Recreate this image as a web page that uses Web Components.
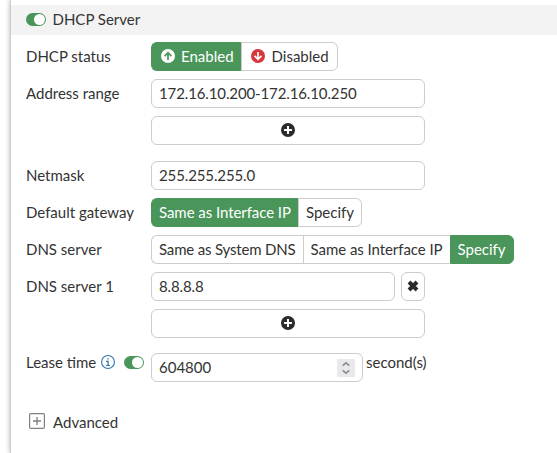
<!DOCTYPE html>
<html lang="en">
<head>
<meta charset="utf-8">
<title>DHCP Server</title>
<style>
html,body{margin:0;height:100%;background:#fff;overflow:hidden}
body{font:15px/20px Lato,"Liberation Sans",sans-serif;color:#333}
</style>
</head>
<body>
<dhcp-panel></dhcp-panel>
<script>
const define = (name, html) => {
  const t = document.createElement('template');
  t.innerHTML = '<style>*{box-sizing:border-box}:host{box-sizing:border-box}</style>' + html;
  customElements.define(name, class extends HTMLElement {
    constructor() {
      super();
      this.attachShadow({ mode: 'open' }).append(t.content.cloneNode(true));
    }
  });
};

const icons = {
  up: '<circle cx="7" cy="7" r="7" fill="#fff"/><path d="M7 11V3.8M3.6 7.1L7 3.7l3.4 3.4" fill="none" stroke="#4a955a" stroke-width="1.7"/>',
  down: '<circle cx="7" cy="7" r="7" fill="#d9363e"/><path d="M7 3v7.2M3.6 6.9L7 10.3l3.4-3.4" fill="none" stroke="#fff" stroke-width="1.7"/>',
  plus: '<circle cx="7" cy="7" r="7" fill="#2b2b2b"/><path d="M7 3v8M3 7h8" stroke="#fff" stroke-width="2"/>',
  times: '<path d="M3 3l8 8M11 3l-8 8" stroke="#2b2b2b" stroke-width="3.9"/>',
  info: '<circle cx="7" cy="7" r="6.45" fill="#fff" stroke="#2f77b0" stroke-width="1.1"/><path d="M6.3 3.2h1.5v1.4H6.3zM5 5.8h2.7v4.1H9V11H4.9V9.9h1.5v-3H5z" fill="#2f77b0"/>'
};
customElements.define('ui-icon', class extends HTMLElement {
  constructor() {
    super();
    this.attachShadow({ mode: 'open' });
  }
  connectedCallback() {
    this.shadowRoot.innerHTML = '<style>:host{display:block;width:14px;height:14px;flex:none}svg{display:block}</style><svg width="14" height="14" viewBox="0 0 14 14">' + icons[this.getAttribute('name')] + '</svg>';
  }
});

define('toggle-switch', `<style>
:host{display:flex;width:20px;height:13px;flex:none;border-radius:7px;background:#4a955a;padding:1px;justify-content:flex-end}
i{width:11px;height:11px;border-radius:50%;background:#fff}
</style><i></i>`);

define('option-group', `<style>
:host{display:inline-flex;height:29px}
::slotted(option-item:first-child){border-radius:6px 0 0 6px}
::slotted(option-item:last-child){border-radius:0 6px 6px 0}
</style><slot></slot>`);

define('option-item', `<style>
:host{display:flex;align-items:center;gap:6px;height:29px;border:1px solid #ccc;padding:0 7px 1px;background:#fff;white-space:nowrap}
:host(:not(:last-child)){border-right-width:0}
:host([selected]){background:#4a955a;border-color:#4a955a;color:#fff}
:host([icon]){padding:0 7px 1px 9px}
:host([icon]:last-child){gap:7px;padding-right:8px}
</style><slot name="icon"></slot><span><slot></slot></span>`);

define('text-field', `<style>
:host{display:flex;align-items:center;width:274px;height:29px;border:1px solid #ccc;border-radius:6px;padding:0 7px 1px;background:#fff}
span{flex:1}
</style><span><slot></slot></span><slot name="end"></slot>`);

define('number-stepper', `<style>
:host{display:block;width:18px;height:18px;margin-top:2px;background:#e9e9ed}
svg{display:block}
</style><svg width="18" height="18" fill="none" stroke="#8b8b91" stroke-width="1.7"><path d="M5.7 6.6L9 3.8l3.3 2.8M5.7 11.4L9 14.2l3.3-2.8"/></svg>`);

define('icon-button', `<style>
:host{display:flex;align-items:center;justify-content:center;width:274px;height:29px;padding-bottom:1px;border:1px solid #ccc;border-radius:6px;background:#fff}
:host([small]){width:24px}
</style><slot></slot>`);

define('form-row', `<style>
:host{display:grid;grid-template-columns:125px auto;justify-content:start}
.label{display:flex;align-items:center;height:29px;padding-bottom:1px;white-space:nowrap}
.control{display:flex;flex-wrap:wrap;gap:8px 6px;align-items:center}
:host([raised]) .label{height:20px;margin-top:-1px;padding:0}
:host([raised]) .control{gap:3px;align-items:flex-start}
</style><div class="label"><slot name="label"></slot></div><div class="control"><slot></slot></div>`);

define('section-header', `<style>
:host{display:flex;align-items:center;gap:6.5px;height:30px;padding:0 0 2px 15px;background:#f3f3f3}
</style><toggle-switch></toggle-switch><span><slot></slot></span>`);

define('advanced-toggle', `<style>
:host{display:flex;align-items:center;gap:8px;height:20px;margin:30px 0 0 3px}
svg{display:block;margin-top:-3px}
</style><svg width="16" height="16" fill="none" stroke="#808080"><rect x=".6" y=".6" width="14.8" height="14.8" rx="1.5" stroke-width="1.2"/><path d="M8 4v8M4 8h8" stroke-width="1.3"/></svg><span><slot></slot></span>`);

define('dhcp-panel', `<style>
:host{display:block;height:453px;margin-left:11px;padding-top:5px;background:#fff;box-shadow:-1px 0 0 #ccc,-1px 0 5px rgba(0,0,0,.3)}
.rows{display:flex;flex-direction:column;gap:8px;padding:7px 0 0 15px}
.break{margin-top:8px}
.lease{margin-top:7px}
.lease toggle-switch{margin-left:9px}
.lease ui-icon{margin-left:5px}
.lease text-field{width:212px}
.lease .unit{margin-top:-1px}
.dns{grid-template-columns:125px 276px}
.t1{letter-spacing:-.06px}
.t2{letter-spacing:-.12px}
.t3{letter-spacing:-.17px}
</style>
<section-header>DHCP Server</section-header>
<div class="rows">
<form-row><span slot="label">DHCP status</span><option-group><option-item selected icon><ui-icon slot="icon" name="up"></ui-icon>Enabled</option-item><option-item icon><ui-icon slot="icon" name="down"></ui-icon>Disabled</option-item></option-group></form-row>
<form-row class="dns"><span slot="label">Address range</span><text-field class="t2">172.16.10.200-172.16.10.250</text-field><icon-button><ui-icon name="plus"></ui-icon></icon-button></form-row>
<form-row class="break"><span slot="label">Netmask</span><text-field class="t2">255.255.255.0</text-field></form-row>
<form-row><span slot="label">Default gateway</span><option-group><option-item class="t1" selected>Same as Interface IP</option-item><option-item>Specify</option-item></option-group></form-row>
<form-row><span slot="label">DNS server</span><option-group><option-item class="t3">Same as System DNS</option-item><option-item class="t1">Same as Interface IP</option-item><option-item selected>Specify</option-item></option-group></form-row>
<form-row class="dns"><span slot="label">DNS server 1</span><text-field class="t2" style="width:244px">8.8.8.8</text-field><icon-button small><ui-icon name="times"></ui-icon></icon-button><icon-button><ui-icon name="plus"></ui-icon></icon-button></form-row>
<form-row class="lease" raised><span slot="label">Lease time</span><ui-icon slot="label" name="info"></ui-icon><toggle-switch slot="label"></toggle-switch><text-field>604800<number-stepper slot="end"></number-stepper></text-field><span class="unit">second(s)</span></form-row>
</div>
<advanced-toggle style="margin-left:18px">Advanced</advanced-toggle>`);
</script>
</body>
</html>
